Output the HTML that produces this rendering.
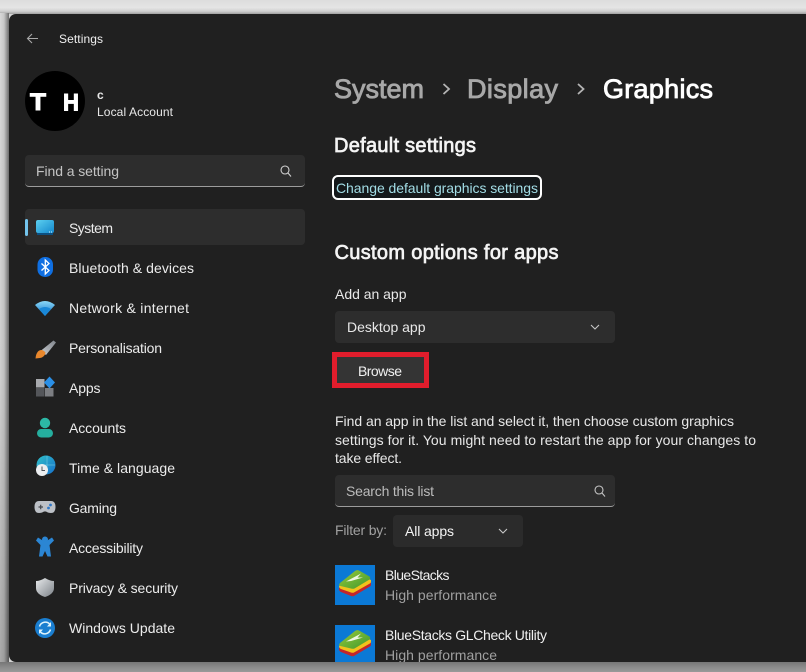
<!DOCTYPE html>
<html lang="en">
<head>
<meta charset="utf-8">
<title>Settings - Graphics</title>
<style>
html,body{margin:0;padding:0;width:806px;height:672px;overflow:hidden;background:#d4d4d4}
.bgt{position:absolute;left:0;top:0;width:806px;height:14px;background:linear-gradient(#dcdcdc,#e4e4e4 55%,#d0d0d0 80%,#a0a0a0)}
.bgl{position:absolute;left:0;top:13px;width:9px;height:659px;background:linear-gradient(90deg,rgba(0,0,0,0),rgba(0,0,0,.08) 45%,rgba(0,0,0,.5)),linear-gradient(#d8d8d8,#d0d0d0 55%,#a8a8a8)}
.bgb{position:absolute;left:0;top:662px;width:806px;height:10px;background:linear-gradient(#767676,#8e8e8e 60%,#9a9a9a)}
.win{position:absolute;left:9px;top:14px;width:797px;height:648px;background:#202020;border-radius:7px 0 0 7px;overflow:hidden}
.box{position:absolute;box-sizing:border-box;background:#2d2d2d;border-radius:4px}
.under{border-bottom:1px solid #9c9c9c}
.ind{position:absolute;left:16px;top:205px;width:3px;height:17px;border-radius:2px;background:#74c4ec}
.avatar{position:absolute;left:16px;top:57px;width:60px;height:60px;border-radius:50%;background:#000}
.link{position:absolute;box-sizing:border-box;left:323px;top:161px;width:210px;height:25px;border:2px solid #fff;border-radius:6px;background:#14181a}
.red{position:absolute;box-sizing:border-box;left:323px;top:338px;width:97px;height:36px;border:5px solid #e11d2c;background:#343434}
svg.o{position:absolute;left:0;top:0}
text{font-family:"Liberation Sans",sans-serif;font-size:14px;fill:#e8e8e8}
.side{fill:#ececec}
.h1{font-size:27px;stroke-width:.85px}
.h2{font-size:20px;fill:#f4f4f4;stroke:#f4f4f4;stroke-width:.7px}
.mut{fill:#a0a0a0}
</style>
</head>
<body>
<div class="bgt"></div><div class="bgl"></div><div class="bgb"></div>
<div class="win">
  <div class="avatar"></div>
  <div class="box under" style="left:16px;top:141px;width:280px;height:32px"></div>
  <div class="box" style="left:16px;top:195px;width:280px;height:36px"></div>
  <div class="ind"></div>
  <div class="link"></div>
  <div class="box" style="left:326px;top:297px;width:280px;height:32px"></div>
  <div class="red"></div>
  <div class="box under" style="left:326px;top:461px;width:280px;height:32px"></div>
  <div class="box" style="left:384px;top:501px;width:130px;height:32px;background:#2b2b2b"></div>
</div>

<svg class="o" width="806" height="672" viewBox="0 0 806 672">
  <defs>
    <clipPath id="w"><rect x="9" y="14" width="797" height="648"/></clipPath>
    <linearGradient id="sys" x1="0" y1="0" x2="1" y2="1"><stop offset="0" stop-color="#5cd0f0"/><stop offset="1" stop-color="#1488cc"/></linearGradient>
    <linearGradient id="wf" x1="0" y1="0" x2="0" y2="1"><stop offset="0" stop-color="#8ad8f8"/><stop offset="1" stop-color="#1274c8"/></linearGradient>
    <linearGradient id="sh" x1="0" y1="0" x2="1" y2="1"><stop offset="0" stop-color="#e8eaec"/><stop offset="1" stop-color="#7c8288"/></linearGradient>
    <linearGradient id="gl" x1="0" y1="0" x2="1" y2="1"><stop offset="0" stop-color="#30c0c8"/><stop offset="1" stop-color="#1670cc"/></linearGradient>
    <linearGradient id="br" x1="1" y1="0" x2="0" y2="1"><stop offset="0" stop-color="#80858c"/><stop offset="1" stop-color="#c8ccd0"/></linearGradient>
    <linearGradient id="grn" x1="0" y1="0" x2="1" y2="1"><stop offset="0" stop-color="#9cc838"/><stop offset="1" stop-color="#3c9a30"/></linearGradient>
    <g id="bs">
      <rect width="40" height="40" fill="#0b79d6"/>
      <path d="M4 23 L20 12 L36 17 L36 20 Q36 21 34 22 L19 31 Q18 31.500 16 31 L6 27 Q4 26 4 24Z" fill="#c4262c"/>
      <path d="M4 21 L20 9 L36 15 L36 17 Q36 18 34 19 L19 27.500 Q18 28 16 27.500 L6 24 Q4 23 4 21Z" fill="#f2c21c"/>
      <path d="M5 18 L20 6 Q22 4.500 24 5.500 L34.500 11.500 Q36 13 34.500 14.500 L19.500 23.500 Q18 24 16 23.500 L5.500 21 Q3 20 5 18Z" fill="url(#grn)"/>
      <path d="M11 16.500 L26 8.500 L22.500 12.500 L28 12.500 L16 16Z" fill="#eef6e0"/>
    </g>
  </defs>

  <!-- title bar -->
  <path d="M38 38.500H27.500M32 34L27.500 38.500L32 43" fill="none" stroke="#a8a8a8" stroke-width="1.100"/>
  <text x="59" y="43" textLength="44" style="font-size:12px;fill:#f0f0f0">Settings</text>

  <!-- account -->
  <text x="30" y="110" style="font-size:24px;font-weight:bold;fill:#fff;stroke:#fff;stroke-width:1px" textLength="16" lengthAdjust="spacingAndGlyphs">T</text>
  <text x="63" y="110.500" style="font-size:24px;font-weight:bold;fill:#fff;stroke:#fff;stroke-width:1px" textLength="16" lengthAdjust="spacingAndGlyphs">H</text>
  <text x="97" y="99" style="font-size:12px;font-weight:bold">c</text>
  <text x="97" y="116" style="font-size:12px" textLength="76">Local Account</text>

  <!-- find -->
  <text x="36" y="176" style="fill:#c4c4c4" textLength="83">Find a setting</text>
  <g fill="none" stroke="#d0d0d0" stroke-width="1.100"><circle cx="285" cy="170" r="4"/><path d="M288 173L291 176.500"/></g>

  <!-- nav icons -->
  <rect x="36" y="220" width="18" height="13" rx="2" fill="url(#sys)"/>
  <rect x="37" y="233" width="16" height="2" fill="#0d4f80"/>
  <path d="M49 232h1M51 232h1" stroke="#d8f0fa" stroke-width="1"/>

  <rect x="37.500" y="257" width="15.500" height="20" rx="7.500" fill="#0f6fe2"/>
  <path d="M41.500 263.500L49 270.500L45.300 274V260L49 263.500L41.500 270.500" fill="none" stroke="#fff" stroke-width="1.300"/>

  <path d="M35 305Q45 297 55 305L45 316Z" fill="url(#wf)"/>
  <path d="M39 309Q45 305 51 309L45 316Z" fill="#1a88d8"/>

  <path d="M53.500 340.500L56 342.500L46 355L40.500 351Z" fill="url(#br)"/>
  <path d="M35.500 358.500Q36 353 38.500 351Q42 348.500 45.500 352.500Q45 357 40 358Z" fill="#e8872c"/>

  <rect x="36" y="379" width="8.500" height="8.500" fill="#a8aaae"/>
  <rect x="36" y="388" width="8.500" height="8.500" fill="#54565a"/>
  <rect x="45" y="388" width="8.500" height="8.500" fill="#7c7e82"/>
  <path d="M49.500 376.500L55 382.500L49.500 388.500L44 382.500Z" fill="#2a8fe6"/>

  <circle cx="45" cy="423" r="5.200" fill="#2cb8a6"/>
  <rect x="37" y="429" width="16" height="8.500" rx="4.200" fill="#25ae9e"/>

  <circle cx="46" cy="465" r="9.500" fill="url(#gl)"/>
  <path d="M37 465H55M47 456V474" stroke="#7fd2e4" stroke-width=".5"/>
  <circle cx="42" cy="470" r="6" fill="#eceef0"/>
  <path d="M42 466.500V470.500H45" fill="none" stroke="#50545a" stroke-width="1"/>

  <path d="M39 501H51Q55.500 501 55.500 507Q55.500 513 51 513Q48 513 46 511.500H44Q42 513 39 513Q34.500 513 34.500 507Q34.500 501 39 501Z" fill="#bcc0c6"/>
  <path d="M38.500 507H43M40.700 504.800V509.200" stroke="#45484e" stroke-width="1.200"/>
  <circle cx="50.500" cy="505" r="1.400" fill="#2f78c8"/><circle cx="48.500" cy="508" r="1.400" fill="#2f78c8"/>

  <circle cx="45" cy="539.500" r="3" fill="#2b86d4"/>
  <path d="M36 540.500L38 537.500L45 542L52 537.500L54 540.500L49.500 545L51 556.500H47.500L45 551L42.500 556.500H39L40.500 545Z" fill="#2b86d4"/>

  <path d="M45 578Q50 581 54 581V588Q54 594 45 597Q36 594 36 588V581Q40 581 45 578Z" fill="url(#sh)"/>

  <circle cx="45" cy="628" r="10" fill="#1a7ed0"/>
  <path d="M39.500 626.500A6 6 0 0 1 50 624.500M50.500 629.500A6 6 0 0 1 40 631.500" fill="none" stroke="#dff3fb" stroke-width="1.500"/>
  <path d="M51 622V626.500H47Z M39 634V629.500H43Z" fill="#dff3fb"/>

  <!-- nav labels -->
  <text class="side" x="69" y="233" textLength="44">System</text>
  <text class="side" x="69" y="273" textLength="125">Bluetooth &amp; devices</text>
  <text class="side" x="69" y="313" textLength="120">Network &amp; internet</text>
  <text class="side" x="69" y="353" textLength="93">Personalisation</text>
  <text class="side" x="69" y="393" textLength="31.500">Apps</text>
  <text class="side" x="69" y="433" textLength="57">Accounts</text>
  <text class="side" x="69" y="473" textLength="106">Time &amp; language</text>
  <text class="side" x="69" y="513" textLength="48">Gaming</text>
  <text class="side" x="69" y="553" textLength="74">Accessibility</text>
  <text class="side" x="69" y="593" textLength="109">Privacy &amp; security</text>
  <text class="side" x="69" y="633" textLength="106">Windows Update</text>

  <!-- breadcrumb -->
  <text class="h1" x="334" y="98" textLength="90" style="fill:#a8a8a8;stroke:#a8a8a8">System</text>
  <path d="M443.500 84L449 89L443.500 94" fill="none" stroke="#b4b4b4" stroke-width="1.800"/>
  <text class="h1" x="467" y="98" textLength="91" style="fill:#a8a8a8;stroke:#a8a8a8">Display</text>
  <path d="M578 84L583.500 89L578 94" fill="none" stroke="#b4b4b4" stroke-width="1.800"/>
  <text class="h1" x="603" y="98" textLength="110" style="fill:#fff;stroke:#fff">Graphics</text>

  <text class="h2" x="334" y="152" textLength="142">Default settings</text>
  <text x="336" y="193" textLength="202" style="fill:#a2dde6">Change default graphics settings</text>
  <text class="h2" x="334.500" y="259" textLength="224">Custom options for apps</text>

  <text x="335" y="299" textLength="71.500">Add an app</text>
  <text x="347" y="332" textLength="78.500">Desktop app</text>
  <path d="M591 325L595 329L599 325" fill="none" stroke="#c8c8c8" stroke-width="1.100"/>
  <text x="358" y="376" textLength="44" style="fill:#f0f0f0">Browse</text>

  <text x="335" y="426" textLength="399">Find an app in the list and select it, then choose custom graphics</text>
  <text x="335" y="445" textLength="421">settings for it. You might need to restart the app for your changes to</text>
  <text x="335" y="463" textLength="67">take effect.</text>

  <text x="346" y="496" textLength="88" style="fill:#bcbcbc">Search this list</text>
  <g fill="none" stroke="#c4c4c4" stroke-width="1.100"><circle cx="599" cy="490" r="4"/><path d="M602 493L605 496.500"/></g>

  <text class="mut" x="335" y="535" textLength="52">Filter by:</text>
  <text x="405" y="536" textLength="49" style="fill:#f4f4f4">All apps</text>
  <path d="M499 529L503 533L507 529" fill="none" stroke="#c8c8c8" stroke-width="1.100"/>

  <g clip-path="url(#w)">
    <use href="#bs" x="335" y="565"/>
    <use href="#bs" x="335" y="625"/>
    <text x="385" y="580" textLength="64.500" style="fill:#f0f0f0">BlueStacks</text>
    <text class="mut" x="385" y="600" textLength="112">High performance</text>
    <text x="385" y="640" textLength="162" style="fill:#f0f0f0">BlueStacks GLCheck Utility</text>
    <text class="mut" x="385" y="660" textLength="112">High performance</text>
  </g>
</svg>
</body>
</html>
